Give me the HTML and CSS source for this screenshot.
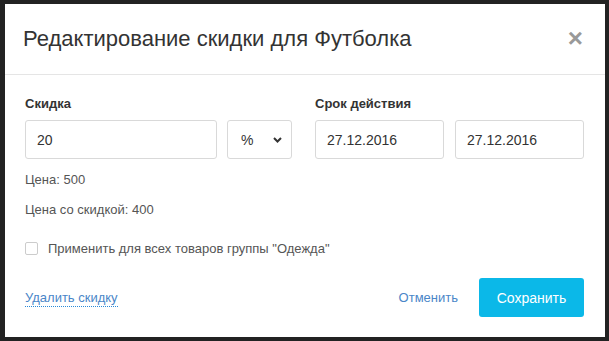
FILE: index.html
```html
<!DOCTYPE html>
<html lang="ru">
<head>
<meta charset="utf-8">
<link rel="stylesheet" href="styles.css">
</head>
<body>
<div class="modal">
  <div class="modal-header">
    <h1 class="modal-title">Редактирование скидки для Футболка</h1>
    <span class="close">&times;</span>
  </div>
  <div class="modal-body">
    <div class="cols">
      <div class="col">
        <div class="label">Скидка</div>
        <div class="row">
          <div class="input amount">20</div>
          <div class="input select"><span>%</span>
            <svg class="chev" width="9" height="6" viewBox="0 0 9 6"><path d="M1 1 L4.5 4.5 L8 1" fill="none" stroke="#333" stroke-width="2"/></svg>
          </div>
        </div>
      </div>
      <div class="col">
        <div class="label">Срок действия</div>
        <div class="row dates">
          <div class="input date">27.12.2016</div>
          <div class="input date">27.12.2016</div>
        </div>
      </div>
    </div>
    <div class="info first">Цена: 500</div>
    <div class="info">Цена со скидкой: 400</div>
    <label class="check"><span class="box"></span>Применить для всех товаров группы "Одежда"</label>
    <div class="footer">
      <a class="delete">Удалить скидку</a>
      <div class="actions">
        <a class="cancel">Отменить</a>
        <button class="save">Сохранить</button>
      </div>
    </div>
  </div>
</div>
</body>
</html>
```
FILE: styles.css
```css
html, body {
  margin: 0;
  padding: 0;
  background: #222;
  width: 609px;
  height: 341px;
  overflow: hidden;
  font-family: "Liberation Sans", Arial, sans-serif;
}
.modal {
  margin: 4px 0 0 5px;
  width: 600px;
  height: 333px;
  background: #fff;
  box-sizing: border-box;
}
.modal-header {
  height: 71px;
  border-bottom: 1px solid #e5e5e5;
  box-sizing: border-box;
  display: flex;
  align-items: center;
  justify-content: space-between;
  padding: 0 22px 0 18px;
}
.modal-title {
  margin: 0;
  font-weight: normal;
  font-size: 22px;
  color: #333;
}
.close {
  font-size: 26px;
  font-weight: bold;
  color: #999;
  line-height: 1;
  margin-top: -2px;
}
.modal-body {
  padding: 20px 21px 0 20px;
}
.cols {
  display: grid;
  grid-template-columns: 267px 269px;
  column-gap: 23px;
}
.label {
  font-size: 13px;
  font-weight: bold;
  color: #333;
  line-height: 17px;
  margin-bottom: 8px;
}
.row {
  display: flex;
  gap: 10px;
}
.dates { gap: 11px; }
.input {
  height: 39px;
  box-sizing: border-box;
  border: 1px solid #d9d9d9;
  border-radius: 3px;
  display: flex;
  align-items: center;
  padding: 0 11px;
  font-size: 14px;
  color: #333;
}
.amount { width: 192px; }
.select {
  width: 65px;
  justify-content: space-between;
  padding: 0 9px 0 13px;
}
.date { width: 129px; }
.info {
  font-size: 13px;
  color: #555;
  line-height: 17px;
  margin-top: 12px;
}
.info + .info { margin-top: 13px; }
.check {
  display: flex;
  align-items: center;
  font-size: 13px;
  color: #555;
  margin-top: 22px;
  line-height: 17px;
}
.box {
  width: 11px;
  height: 11px;
  border: 1px solid #ccc;
  border-radius: 2px;
  margin-right: 10px;
}
.footer {
  display: flex;
  justify-content: space-between;
  align-items: center;
  margin-top: 21px;
}
.delete {
  font-size: 13px;
  color: #4a86c8;
  border-bottom: 1px dotted #2a8ad8;
  line-height: 16px;
  margin-top: 1px;
}
.actions {
  display: flex;
  align-items: center;
}
.cancel {
  font-size: 13px;
  color: #4a86c8;
  margin-right: 21px;
}
.save {
  width: 105px;
  height: 39px;
  border: 0;
  border-radius: 3px;
  background: #0bb8e8;
  color: #fff;
  font-family: "Liberation Sans", Arial, sans-serif;
  font-size: 14px;
  padding: 0;
}
```
